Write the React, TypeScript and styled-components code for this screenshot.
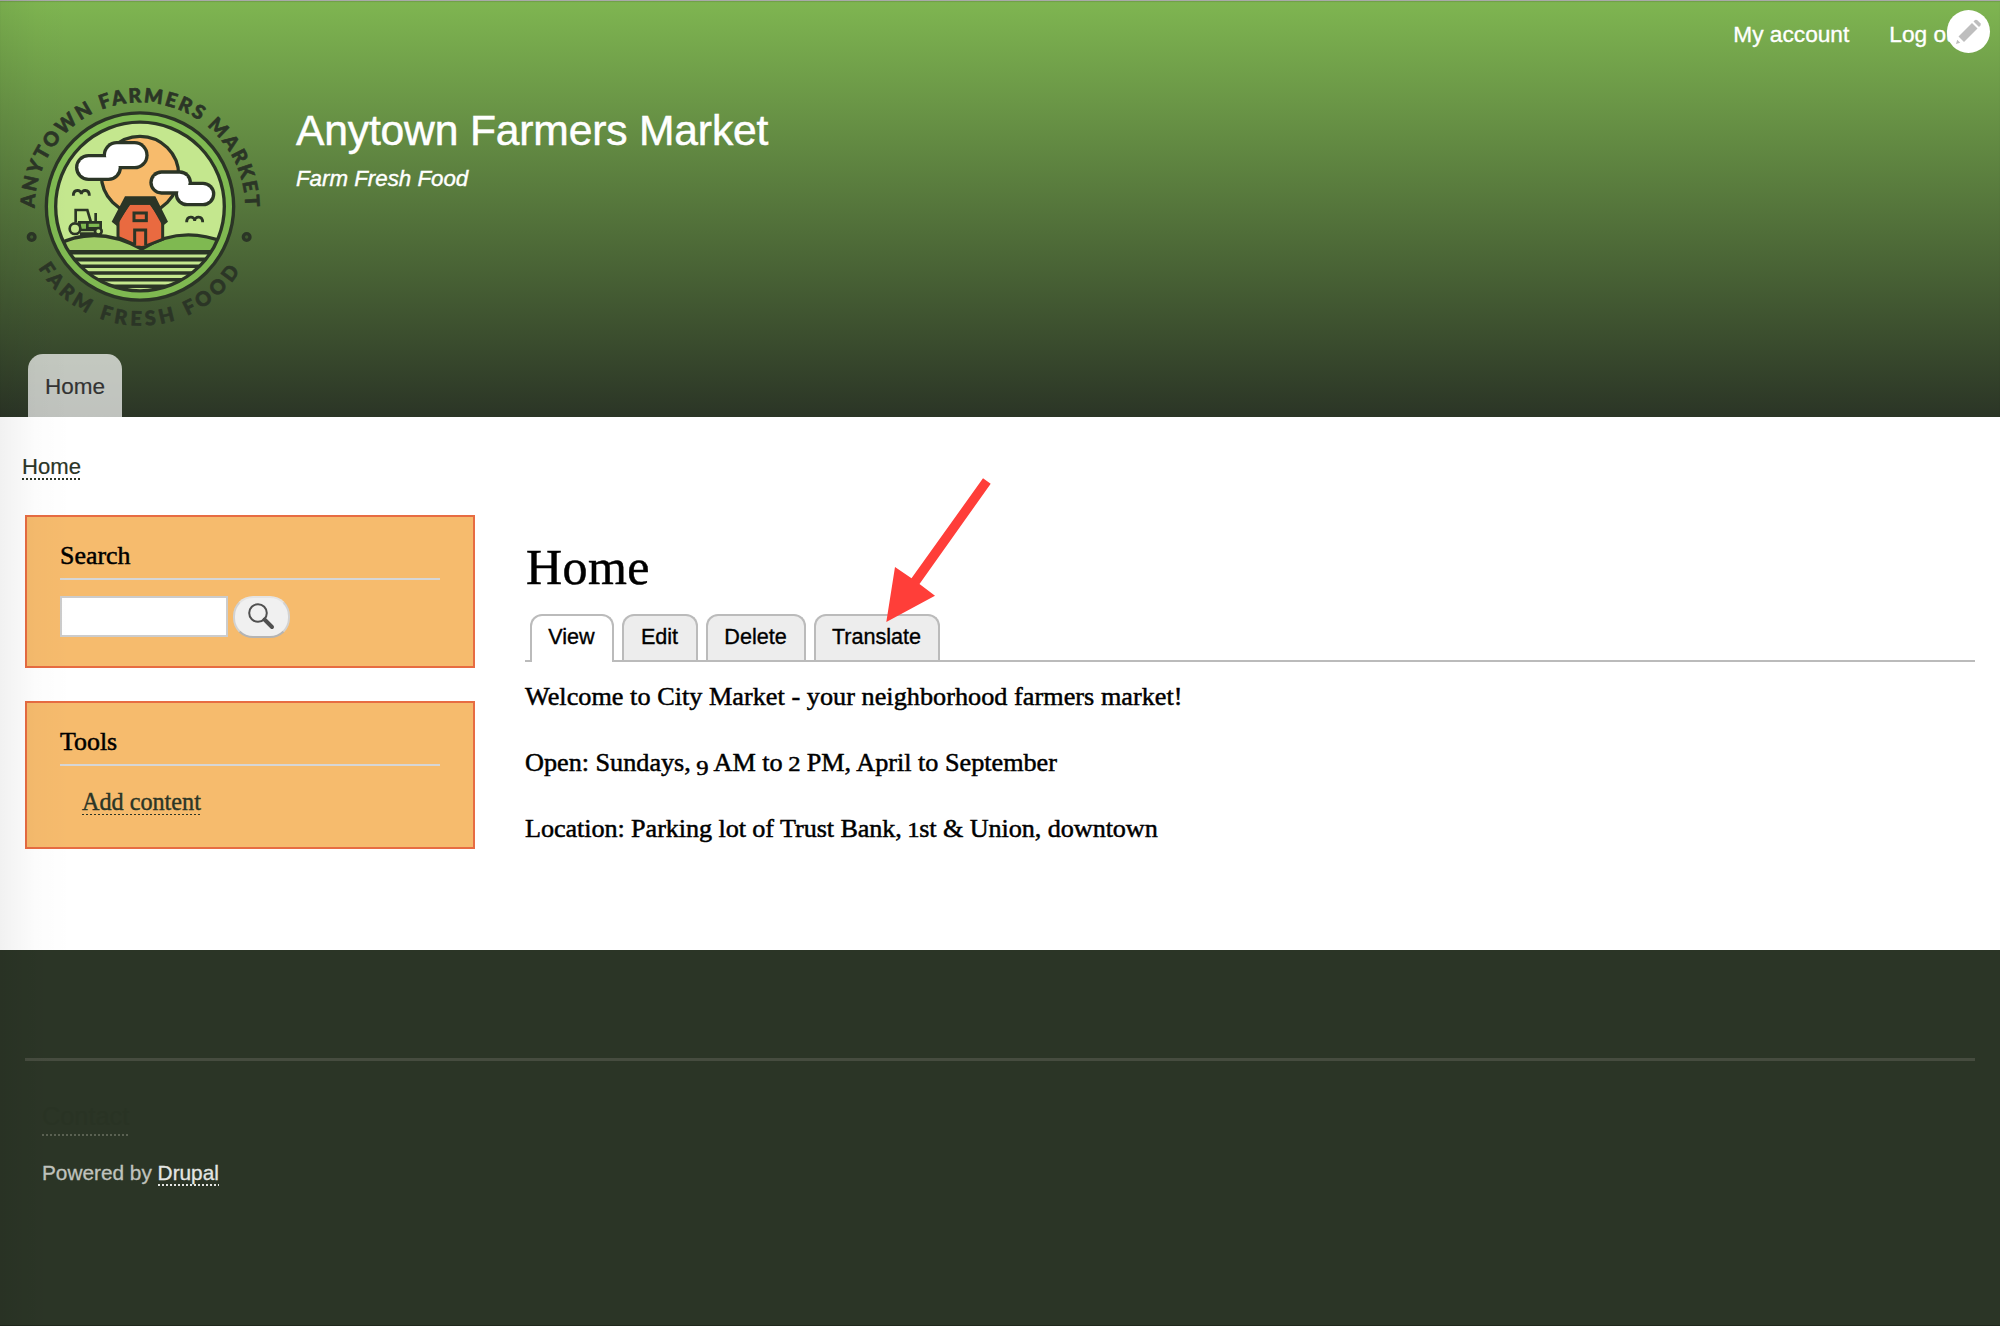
import React from "react";
import styled, { createGlobalStyle } from "styled-components";

const sans = `"Liberation Sans", Arial, sans-serif`;
const serif = `"Liberation Serif", "Times New Roman", serif`;
const ink = "#2b3526";

const GlobalStyle = createGlobalStyle`
  * { box-sizing: border-box; }
  body { margin: 0; background: #fff; font-family: ${serif}; color: #000; }
  h1, h2, p { margin: 0; font-weight: 400; }
`;

const Page = styled.div`
  position: relative;
  width: 2000px;
  height: 1326px;
  overflow: hidden;
  display: flex;
  flex-direction: column;
`;

const EdgeShade = styled.div`
  position: absolute;
  inset: 0 auto 0 0;
  width: 72px;
  pointer-events: none;
  background: linear-gradient(to right, rgba(0, 0, 0, 0.055), rgba(0, 0, 0, 0.012) 50%, transparent);
`;

const Header = styled.header`
  height: 417px;
  display: flex;
  flex-direction: column;
  background: linear-gradient(#7fb651, ${ink});
  box-shadow: inset 0 1px 0 #a9a9a9, inset 0 2px 1px rgba(0, 0, 0, 0.12);
  font-family: ${sans};
  color: #fff;
`;

const UserMenu = styled.nav`
  display: flex;
  justify-content: flex-end;
  gap: 40px;
  padding: 19px 35px 0 0;
  font-size: 22.7px;
  line-height: 30px;
  -webkit-text-stroke: 0.35px;
`;

const EditToggle = styled.button`
  position: absolute;
  top: 10px;
  right: 10px;
  width: 43px;
  height: 43px;
  padding: 0;
  border: 0;
  border-radius: 50%;
  background: #fff;
  svg { display: block; }
`;

const Branding = styled.div`
  display: flex;
  margin-top: 21px;
`;

const LogoArt = styled.svg`
  width: 280px;
  height: 270px;
  display: block;
`;

const SiteText = styled.div`
  padding: 35px 0 0 16px;
`;

const SiteName = styled.div`
  font-size: 42.6px;
  line-height: 50px;
  letter-spacing: -0.16px;
  white-space: nowrap;
  -webkit-text-stroke: 0.5px;
`;

const Slogan = styled.div`
  margin-top: 9px;
  font-size: 22.3px;
  line-height: 30px;
  font-style: italic;
  -webkit-text-stroke: 0.4px;
`;

const MainTab = styled.a`
  width: 94px;
  height: 63px;
  margin: 14px 0 0 28px;
  padding-top: 1px;
  line-height: 63px;
  border-radius: 15px 15px 0 0;
  background: rgba(255, 255, 255, 0.7);
  color: #333;
  font-size: 22.5px;
  text-align: center;
  -webkit-text-stroke: 0.2px;
`;

const Main = styled.main`
  height: 533px;
  background: #fff;
`;

const Dotted = styled.a<{ $tall: number; $dot?: number; $line?: string }>`
  display: inline-block;
  height: ${(p) => p.$tall}px;
  color: inherit;
  background: repeating-linear-gradient(
      to right,
      ${(p) => p.$line ?? "currentColor"} 0 2px,
      transparent 2px 4px
    )
    left bottom / 100% ${(p) => p.$dot ?? 2}px no-repeat;
`;

const Breadcrumb = styled.div`
  display: flex;
  padding: 35px 0 0 22px;
  color: ${ink};
  font: 22.1px/30px ${sans};
  -webkit-text-stroke: 0.2px;
`;

const Columns = styled.div`
  display: flex;
  gap: 50px;
  padding: 35px 25px 0;
`;

const Sidebar = styled.aside`
  width: 450px;
  display: flex;
  flex-direction: column;
  gap: 33px;
`;

const Block = styled.section`
  padding: 24px 33px 28px;
  border: 2px solid #e76c42;
  background: #f6bb6d;
`;

const BlockTitle = styled.h2`
  padding-bottom: 7px;
  border-bottom: 2px solid #d6d6d6;
  font-size: 25.9px;
  line-height: 30px;
  -webkit-text-stroke: 0.5px;
`;

const SearchRow = styled.form`
  display: flex;
  gap: 5px;
  height: 42px;
  margin-top: 16px;
`;

const SearchInput = styled.input`
  width: 168px;
  height: 41px;
  border: 2px solid #ccc;
  border-radius: 0;
  background: #fff;
`;

const SearchButton = styled.button`
  width: 57px;
  height: 42px;
  padding: 0;
  border: 2px solid;
  border-color: #e4e4e4 #d2d2d2 #b4b4b4;
  border-radius: 20px;
  background: #f0f0f0;
  display: flex;
  align-items: flex-start;
  svg { margin: 5px 0 0 13px; }
`;

const ToolList = styled.div`
  display: flex;
  padding: 21px 0 4px 22px;
  color: ${ink};
  font-size: 24.2px;
  line-height: 30px;
  -webkit-text-stroke: 0.4px;
`;

const Content = styled.article`
  flex: 1;
  padding-top: 22px;
`;

const PageTitle = styled.h1`
  padding-left: 1px;
  font-size: 50px;
  line-height: 60px;
  letter-spacing: 0.4px;
  -webkit-text-stroke: 0.5px;
`;

const Tabs = styled.div`
  display: flex;
  gap: 8px;
  height: 48px;
  margin-top: 17px;
  padding-left: 5px;
  background: linear-gradient(#bbb, #bbb) left bottom / 100% 2px no-repeat;
`;

const Tab = styled.a<{ $w: number; $active?: boolean }>`
  width: ${(p) => p.$w}px;
  height: ${(p) => (p.$active ? 48 : 46)}px;
  padding-right: 1px;
  border: 2px solid #bbb;
  border-bottom: 0;
  border-radius: 12px 12px 0 0;
  background: ${(p) => (p.$active ? "#fff" : "#ededed")};
  font: 21.6px/41px ${sans};
  text-align: center;
  -webkit-text-stroke: 0.35px;
`;

const Body = styled.div`
  margin-top: 2px;
  font-size: 26.2px;
  line-height: 66px;
  -webkit-text-stroke: 0.5px;
`;

const Line = styled.p<{ $track?: number }>`
  white-space: nowrap;
  letter-spacing: ${(p) => p.$track ?? 0}px;
`;

const OldStyle = styled.span<{ $drop?: number }>`
  display: inline-block;
  line-height: 1;
  font-size: 0.84em;
  transform: translateY(${(p) => p.$drop ?? 0}px) scaleX(1.12);
  transform-origin: 50% 80%;
`;

const Footer = styled.footer`
  height: 376px;
  padding: 108px 25px 0;
  background: ${ink};
  box-shadow: inset 0 -1px 0 #20281c;
  font-family: ${sans};
`;

const FooterInner = styled.div`
  display: flex;
  flex-direction: column;
  align-items: flex-start;
  padding: 40px 17px 0;
  border-top: 3px solid #464c3f;
`;

const Contact = styled.div`
  display: flex;
  color: #293324;
  font-size: 25.3px;
  line-height: 30px;
`;

const Powered = styled.div`
  margin-top: 24px;
  color: #c0c3be;
  font-size: 20.8px;
  line-height: 26px;
  -webkit-text-stroke: 0.3px;
`;

const Bright = styled.span`
  color: #e4e6e3;
`;

const Arrow = styled.svg`
  position: absolute;
  left: 880px;
  top: 470px;
`;

const pills = {
  big: [
    [308, 213, 138, 85],
    [225, 252, 141, 81],
  ],
  small: [
    [448, 301, 128, 73],
    [524, 335, 122, 74],
  ],
};

function Cloud({ parts }: { parts: number[][] }) {
  return (
    <g>
      {parts.map(([x, y, w, h], i) => (
        <rect key={i} x={x} y={y} width={w} height={h} rx={h / 2} fill={ink} />
      ))}
      {parts.map(([x, y, w, h], i) => (
        <rect key={i} x={x + 10} y={y + 10} width={w - 20} height={h - 20} rx={h / 2 - 10} fill="#fff" />
      ))}
    </g>
  );
}

function Logo() {
  return (
    <LogoArt viewBox="0 0 840 810">
      <defs>
        <path id="arcTop" d="M104 414 A316 317 0 0 1 736 414" />
        <path id="arcBottom" d="M115 594 A356 356 0 0 0 725 594" />
        <clipPath id="disc">
          <circle cx="420" cy="409.5" r="253" />
        </clipPath>
      </defs>
      <g
        fill={ink}
        stroke={ink}
        strokeWidth="2"
        strokeLinejoin="round"
        fontFamily="Lato, sans-serif"
        fontWeight="900"
        fontSize="59"
      >
        <text textLength="991">
          <textPath href="#arcTop" textLength="991">ANYTOWN FARMERS MARKET</textPath>
        </text>
        <text textLength="722">
          <textPath href="#arcBottom" textLength="722">FARM FRESH FOOD</textPath>
        </text>
      </g>
      <g fill="#3f5a30" stroke={ink} strokeWidth="10">
        <circle cx="95" cy="501" r="10" />
        <circle cx="740" cy="501" r="10" />
      </g>
      <circle cx="420" cy="409.5" r="281" fill="#7fb951" stroke={ink} strokeWidth="10" />
      <circle cx="420" cy="409.5" r="253" fill="#c4e78e" />
      <g clipPath="url(#disc)" stroke={ink} strokeWidth="10">
        <circle cx="420" cy="315" r="116" fill="#f7bb6c" />
        <path d="M160 530 Q285 460 425 537 L425 548 H160Z" fill="#a1ce68" />
        <path d="M425 537 Q545 462 680 520 V548 H425Z" fill="#7fb951" />
        <rect x="150" y="545" width="540" height="130" fill={ink} />
        <path
          d="M150 558H690M150 579H690M150 599H690M150 619H690M150 639H690M150 659H690"
          stroke="#c4e78e"
          strokeWidth="9.5"
        />
      </g>
      <circle cx="420" cy="409.5" r="253" fill="none" stroke={ink} strokeWidth="10" />
      <Cloud parts={pills.big} />
      <Cloud parts={pills.small} />
      <g fill="none" stroke={ink} strokeWidth="8.5">
        <path d="M220 377 C220 357 244 357 244 373 C244 357 268 357 268 377" />
        <path d="M560 457 C560 437 584 437 584 453 C584 437 608 437 608 457" />
      </g>
      <path
        d="M354 450 L388 400 H452 L488 450 V508 L425 533 L354 502Z"
        fill="#e96a40"
        stroke={ink}
        strokeWidth="9"
      />
      <path d="M375 379 H466 L504 455 L488 468 L452 404 H388 L351 468 L335 455Z" fill={ink} />
      <rect x="402" y="429" width="37" height="23" fill="#e96a40" stroke={ink} strokeWidth="9" />
      <path d="M404 527 V480 H437 V527" fill="#e96a40" stroke={ink} strokeWidth="9" />
      <g stroke={ink} strokeWidth="8">
        <path d="M227 457 V420 H262 L273 457" fill="#c4e78e" />
        <path d="M238 457 H302 V480 H240Z" fill="#7fb951" />
        <path d="M262 457 V475 H300 M287 429 V457 M240 491 H290" fill="none" />
        <circle cx="225" cy="476" r="16" fill="#c4e78e" />
        <circle cx="295" cy="484" r="10" fill="#c4e78e" />
      </g>
    </LogoArt>
  );
}

export default function App() {
  return (
    <Page>
      <GlobalStyle />
      <Header>
        <UserMenu>
          <span>My account</span>
          <span>Log out</span>
        </UserMenu>
        <Branding>
          <Logo />
          <SiteText>
            <SiteName>Anytown Farmers Market</SiteName>
            <Slogan>Farm Fresh Food</Slogan>
          </SiteText>
        </Branding>
        <MainTab>Home</MainTab>
      </Header>
      <Main>
        <Breadcrumb>
          <Dotted $tall={28}>Home</Dotted>
        </Breadcrumb>
        <Columns>
          <Sidebar>
            <Block>
              <BlockTitle>Search</BlockTitle>
              <SearchRow>
                <SearchInput />
                <SearchButton type="button">
                  <svg width="28" height="28" viewBox="0 0 28 28" fill="none" stroke="#505050">
                    <circle cx="10" cy="10" r="8.8" strokeWidth="2" />
                    <path d="M16.5 16.5 L24 24" strokeWidth="4" strokeLinecap="round" />
                  </svg>
                </SearchButton>
              </SearchRow>
            </Block>
            <Block>
              <BlockTitle>Tools</BlockTitle>
              <ToolList>
                <Dotted $tall={28} $dot={1}>Add content</Dotted>
              </ToolList>
            </Block>
          </Sidebar>
          <Content>
            <PageTitle>Home</PageTitle>
            <Tabs>
              <Tab $w={84} $active>View</Tab>
              <Tab $w={76}>Edit</Tab>
              <Tab $w={100}>Delete</Tab>
              <Tab $w={126}>Translate</Tab>
            </Tabs>
            <Body>
              <Line $track={0.04}>Welcome to City Market - your neighborhood farmers market!</Line>
              <Line>
                Open: Sundays, <OldStyle $drop={4}>9</OldStyle> AM to <OldStyle>2</OldStyle> PM, April to September
              </Line>
              <Line $track={-0.08}>
                Location: Parking lot of Trust Bank, <OldStyle>1</OldStyle>st &amp; Union, downtown
              </Line>
            </Body>
          </Content>
        </Columns>
      </Main>
      <Footer>
        <FooterInner>
          <Contact>
            <Dotted $tall={35} $line="#5a6152">Contact</Dotted>
          </Contact>
          <Powered>
            Powered by{" "}
            <Bright>
              <Dotted $tall={26}>Drupal</Dotted>
            </Bright>
          </Powered>
        </FooterInner>
      </Footer>
      <EdgeShade />
      <EditToggle>
        <svg width="43" height="43" viewBox="0 0 43 43" fill="#bebebe">
          <path d="M9 34 L10.2 29.8 L13.2 32.8Z" />
          <path d="M11.5 26.5 L25 13 L30.5 18.5 L17 32Z" />
          <path d="M26.5 11.5 L28 10 Q29.2 9.2 30.4 10.2 L33.4 13.2 Q34.2 14.3 33.4 15.5 L32 17Z" />
        </svg>
      </EditToggle>
      <Arrow width="120" height="160" viewBox="880 470 120 160">
        <path
          fill="#ff3e39"
          d="M886.3 622 L895 567 L911.5 578.3 L983 478.3 L990.7 483.7 L919.5 584 L935 595.7Z"
        />
      </Arrow>
    </Page>
  );
}
